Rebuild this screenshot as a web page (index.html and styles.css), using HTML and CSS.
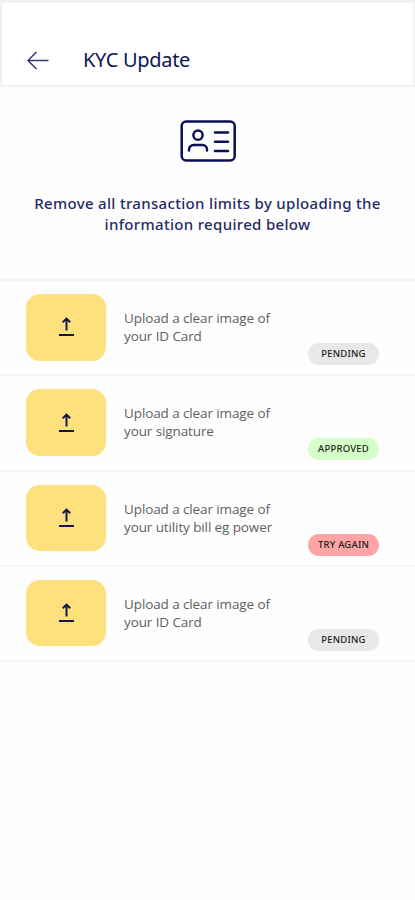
FILE: index.html
```html
<!DOCTYPE html>
<html lang="en">
<head>
<meta charset="utf-8">
<meta name="viewport" content="width=device-width, initial-scale=1">
<title>KYC Update</title>
<link rel="stylesheet" href="styles.css">
</head>
<body>
<svg class="symbols" aria-hidden="true">
  <symbol id="upload" viewBox="0 0 18 22"><path d="M9.500 14.500V3M5.800 6.300l3.700-3.700 3.700 3.700M2 19h15" fill="none" stroke="currentColor" stroke-width="2"/></symbol>
</svg>
<header class="topbar">
  <svg class="back" viewBox="0 0 24 20"><path d="M22.500 10.500H2M10.500 2 2 10.500l8.500 8.500" fill="none" stroke="currentColor" stroke-width="1.500"/></svg>
  <h1 class="title">KYC Update</h1>
</header>
<main>
  <section class="intro">
    <svg class="card" viewBox="0 0 56 42" fill="none" stroke="currentColor" stroke-width="2.500" stroke-linecap="round">
      <rect x="1.700" y="1.500" width="53" height="39" rx="4.500"/>
      <circle cx="18" cy="15.200" r="4.600"/>
      <path d="M9 30.500v-1a4.500 4.500 0 0 1 4.500-4.500h9a4.500 4.500 0 0 1 4.500 4.500v1M35 12.500h13M35 21.700h13M35 31h13"/>
    </svg>
    <p class="lead">Remove all transaction limits by uploading the<br>information required below</p>
  </section>
  <ul class="list">
    <li class="row"><button class="tile" aria-label="Upload"><svg class="up"><use href="#upload"/></svg></button><p class="text">Upload a clear image of<br>your ID Card</p><span class="pill">PENDING</span></li>
    <li class="row"><button class="tile" aria-label="Upload"><svg class="up"><use href="#upload"/></svg></button><p class="text">Upload a clear image of<br>your signature</p><span class="pill approved">APPROVED</span></li>
    <li class="row"><button class="tile" aria-label="Upload"><svg class="up"><use href="#upload"/></svg></button><p class="text">Upload a clear image of<br>your utility bill eg power</p><span class="pill retry">TRY AGAIN</span></li>
    <li class="row"><button class="tile" aria-label="Upload"><svg class="up"><use href="#upload"/></svg></button><p class="text">Upload a clear image of<br>your ID Card</p><span class="pill">PENDING</span></li>
  </ul>
</main>
</body>
</html>
```
FILE: styles.css
```css
* { box-sizing: border-box; margin: 0; padding: 0; }
body { min-height: 900px; background: #fefefe; color: #0b1252; font-family: "Noto Sans", "Open Sans", sans-serif; }
.symbols { display: none; }
.topbar { display: flex; align-items: center; height: 87px; padding: 32px 24px 0; border: 2px solid #f1f1f1; border-top-width: 3px; background: #fff; }
.back { width: 24px; height: 20px; color: #35396f; }
.title { margin-left: 33px; font-size: 20px; line-height: 28px; font-weight: 400; letter-spacing: -0.300px; color: #0f1656; }
.intro { display: flex; flex-direction: column; align-items: center; height: 192px; padding-top: 33px; }
.card { width: 56px; height: 42px; color: #0a1057; }
.lead { margin-top: 31px; font-size: 15px; line-height: 21px; font-weight: 500; letter-spacing: 0.320px; text-align: center; color: #252b65; white-space: nowrap; }
.list { list-style: none; border-top: 2px solid #f5f5f5; }
.row { display: flex; height: 95.300px; padding: 13px 36px 0 26px; border-bottom: 2px solid #f5f5f5; }
.tile { display: flex; align-items: center; justify-content: center; width: 80px; height: 66.500px; border: 0; border-radius: 14px; background: #fee07d; color: #10164e; }
.up { width: 18px; height: 22px; }
.text { margin: 15px 0 0 18px; flex: 1; font-family: "Open Sans", sans-serif; font-size: 13.500px; line-height: 18px; letter-spacing: -0.110px; color: #606060; white-space: nowrap; }
.pill { width: 71px; height: 22px; margin-top: 49px; border-radius: 11px; background: #e8e8e8; color: #202020; font-size: 9.500px; line-height: 22px; font-weight: 500; letter-spacing: 0.200px; text-align: center; }
.approved { background: #d5ffc8; }
.retry { background: #ffa5a6; }
```
